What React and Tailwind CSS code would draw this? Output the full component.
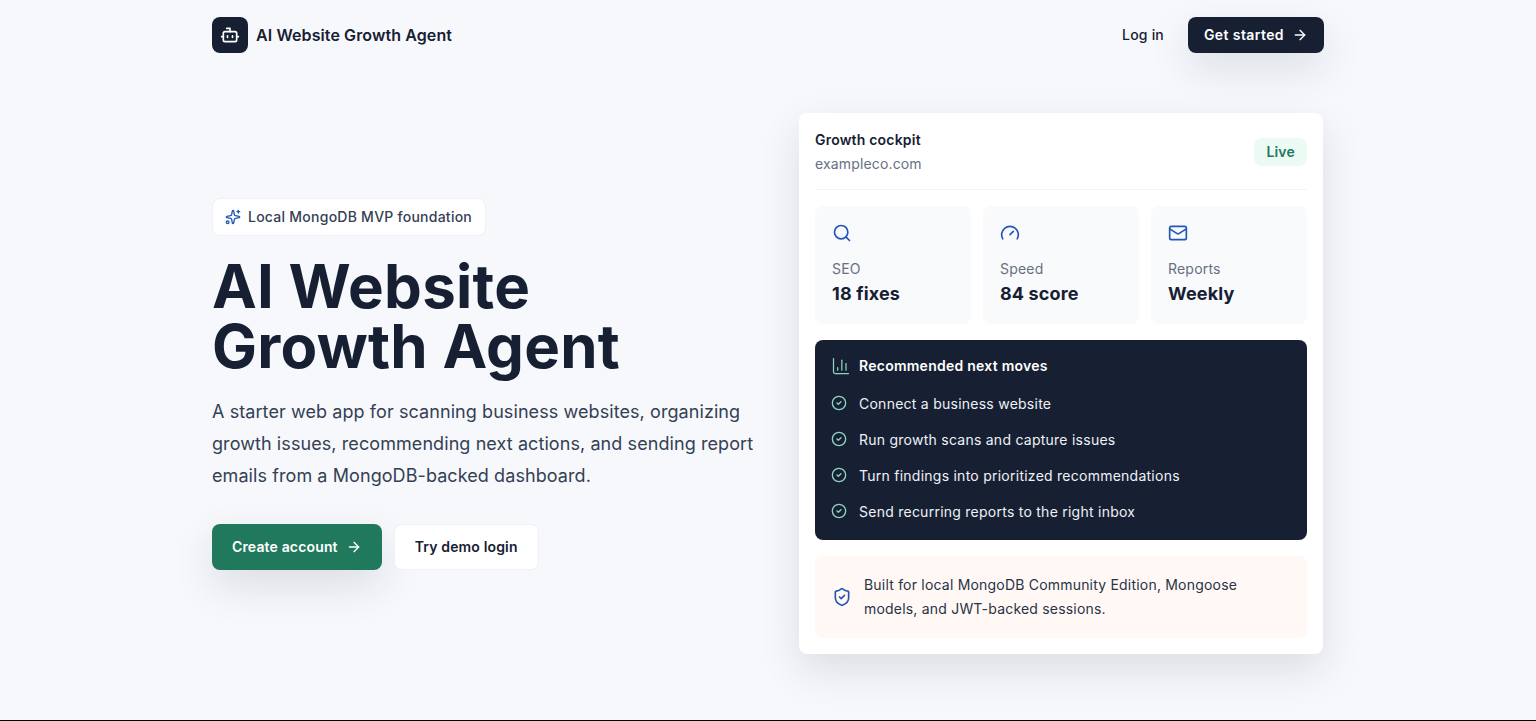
import React from "react";
import { ArrowRight, Bot, ChartColumn, CircleCheck, Gauge, Mail, Search, ShieldCheck, Sparkles } from "lucide-react";

const metrics = [
  { icon: Search, label: "SEO", value: "18 fixes" },
  { icon: Gauge, label: "Speed", value: "84 score" },
  { icon: Mail, label: "Reports", value: "Weekly" },
];

const moves = [
  "Connect a business website",
  "Run growth scans and capture issues",
  "Turn findings into prioritized recommendations",
  "Send recurring reports to the right inbox",
];

const App = () => {
  return (
    <div className="h-[721px] overflow-hidden bg-black font-['Inter',sans-serif]">
      <div className="h-[720px] bg-[#f6f8fc] text-[#172033]">
        <div className="mx-auto w-[1112px]">
          {/* Header */}
          <header className="flex items-center justify-between pt-[17px]">
            <div className="flex items-center gap-2">
              <div className="flex h-9 w-9 items-center justify-center rounded-lg bg-[#172033] text-white">
                <Bot className="h-5 w-5" />
              </div>
              <span className="text-base font-semibold tracking-[0.1px]">AI Website Growth Agent</span>
            </div>
            <div className="flex items-center gap-2">
              <button className="px-4 text-sm font-medium tracking-[0.2px]">Log in</button>
              <button className="flex h-9 items-center gap-2 rounded-lg bg-[#172033] px-4 text-sm font-semibold tracking-[0.4px] text-white shadow-[0_16px_40px_rgba(23,32,51,0.12)]">
                Get started
                <ArrowRight className="h-4 w-4" />
              </button>
            </div>
          </header>

          {/* Hero */}
          <main className="mt-[60px] grid grid-cols-[548px_524px] items-center gap-[39px]">
            <section>
              <div className="inline-flex h-[38px] items-center gap-[7px] rounded-lg border border-[#eef1f6] bg-white pl-3 pr-[13px] text-sm font-medium tracking-[0.25px] text-[#344054]">
                <Sparkles className="h-4 w-4 text-[#2456b8]" />
                Local MongoDB MVP foundation
              </div>
              <h1 className="mt-5 text-[60px] font-bold leading-[60px] tracking-[0.25px]">
                AI Website
                <br />
                Growth Agent
              </h1>
              <p className="mt-5 text-lg leading-8 tracking-[0.08px] text-[#344054]">
                A starter web app for scanning business websites, organizing growth issues, recommending next actions, and sending report emails from a MongoDB-backed dashboard.
              </p>
              <div className="mt-8 flex gap-3">
                <button className="flex h-[46px] items-center gap-2 rounded-lg bg-[#20795c] px-5 text-sm font-semibold tracking-[0.15px] text-white shadow-[0_16px_40px_rgba(23,32,51,0.12)]">
                  Create account
                  <ArrowRight className="h-4 w-4" />
                </button>
                <button className="h-[46px] rounded-lg border border-[#eef1f6] bg-white px-5 text-sm font-semibold tracking-[0.15px]">
                  Try demo login
                </button>
              </div>
            </section>

            {/* Growth cockpit card */}
            <section className="rounded-lg bg-white px-4 pb-4 pt-[15px] shadow-[0_16px_40px_rgba(23,32,51,0.12)]">
              <div className="flex items-center justify-between border-b border-[#f1f4f8] pb-[13px]">
                <div>
                  <div className="text-sm font-semibold leading-6 tracking-[0.2px]">Growth cockpit</div>
                  <div className="text-sm leading-6 tracking-[0.15px] text-[#667085]">exampleco.com</div>
                </div>
                <span className="rounded-lg bg-[#ecfaf4] px-3 py-1 text-sm font-semibold leading-5 tracking-[0.2px] text-[#20795c]">Live</span>
              </div>

              <div className="mt-4 grid grid-cols-3 gap-3">
                {metrics.map(({ icon: Icon, label, value }) => (
                  <div key={label} className="h-[118px] rounded-lg bg-[#f8fafc] p-[17px]">
                    <Icon className="h-5 w-5 text-[#2456b8]" />
                    <div className="mt-4 text-sm leading-5 tracking-[0.2px] text-[#667085]">{label}</div>
                    <div className="mt-[3px] text-lg font-bold leading-6 tracking-[0.15px] text-[#172033]">{value}</div>
                  </div>
                ))}
              </div>

              <div className="mt-4 h-[200px] rounded-lg bg-[#172033] p-4 text-white">
                <div className="flex h-5 items-center gap-2 text-sm font-semibold tracking-[0.25px]">
                  <ChartColumn className="h-5 w-5 text-[#8fd3c1]" strokeWidth={1.5} />
                  Recommended next moves
                </div>
                <ul className="mt-[9px]">
                  {moves.map((move) => (
                    <li key={move} className="flex h-9 items-center gap-3 text-sm tracking-[0.25px] text-[#eef1f6]">
                      <CircleCheck className="h-4 w-4 shrink-0 text-[#8fd3c1]" />
                      <span className="pt-0.5">{move}</span>
                    </li>
                  ))}
                </ul>
              </div>

              <div className="mt-4 flex h-[82px] items-center gap-3 rounded-lg bg-[#fff8f4] px-[17px] text-sm leading-6 tracking-[0.2px] text-[#293347]">
                <ShieldCheck className="h-5 w-5 shrink-0 text-[#2456b8]" />
                <p>Built for local MongoDB Community Edition, Mongoose models, and JWT-backed sessions.</p>
              </div>
            </section>
          </main>
        </div>
      </div>
    </div>
  );
};

export default App;
